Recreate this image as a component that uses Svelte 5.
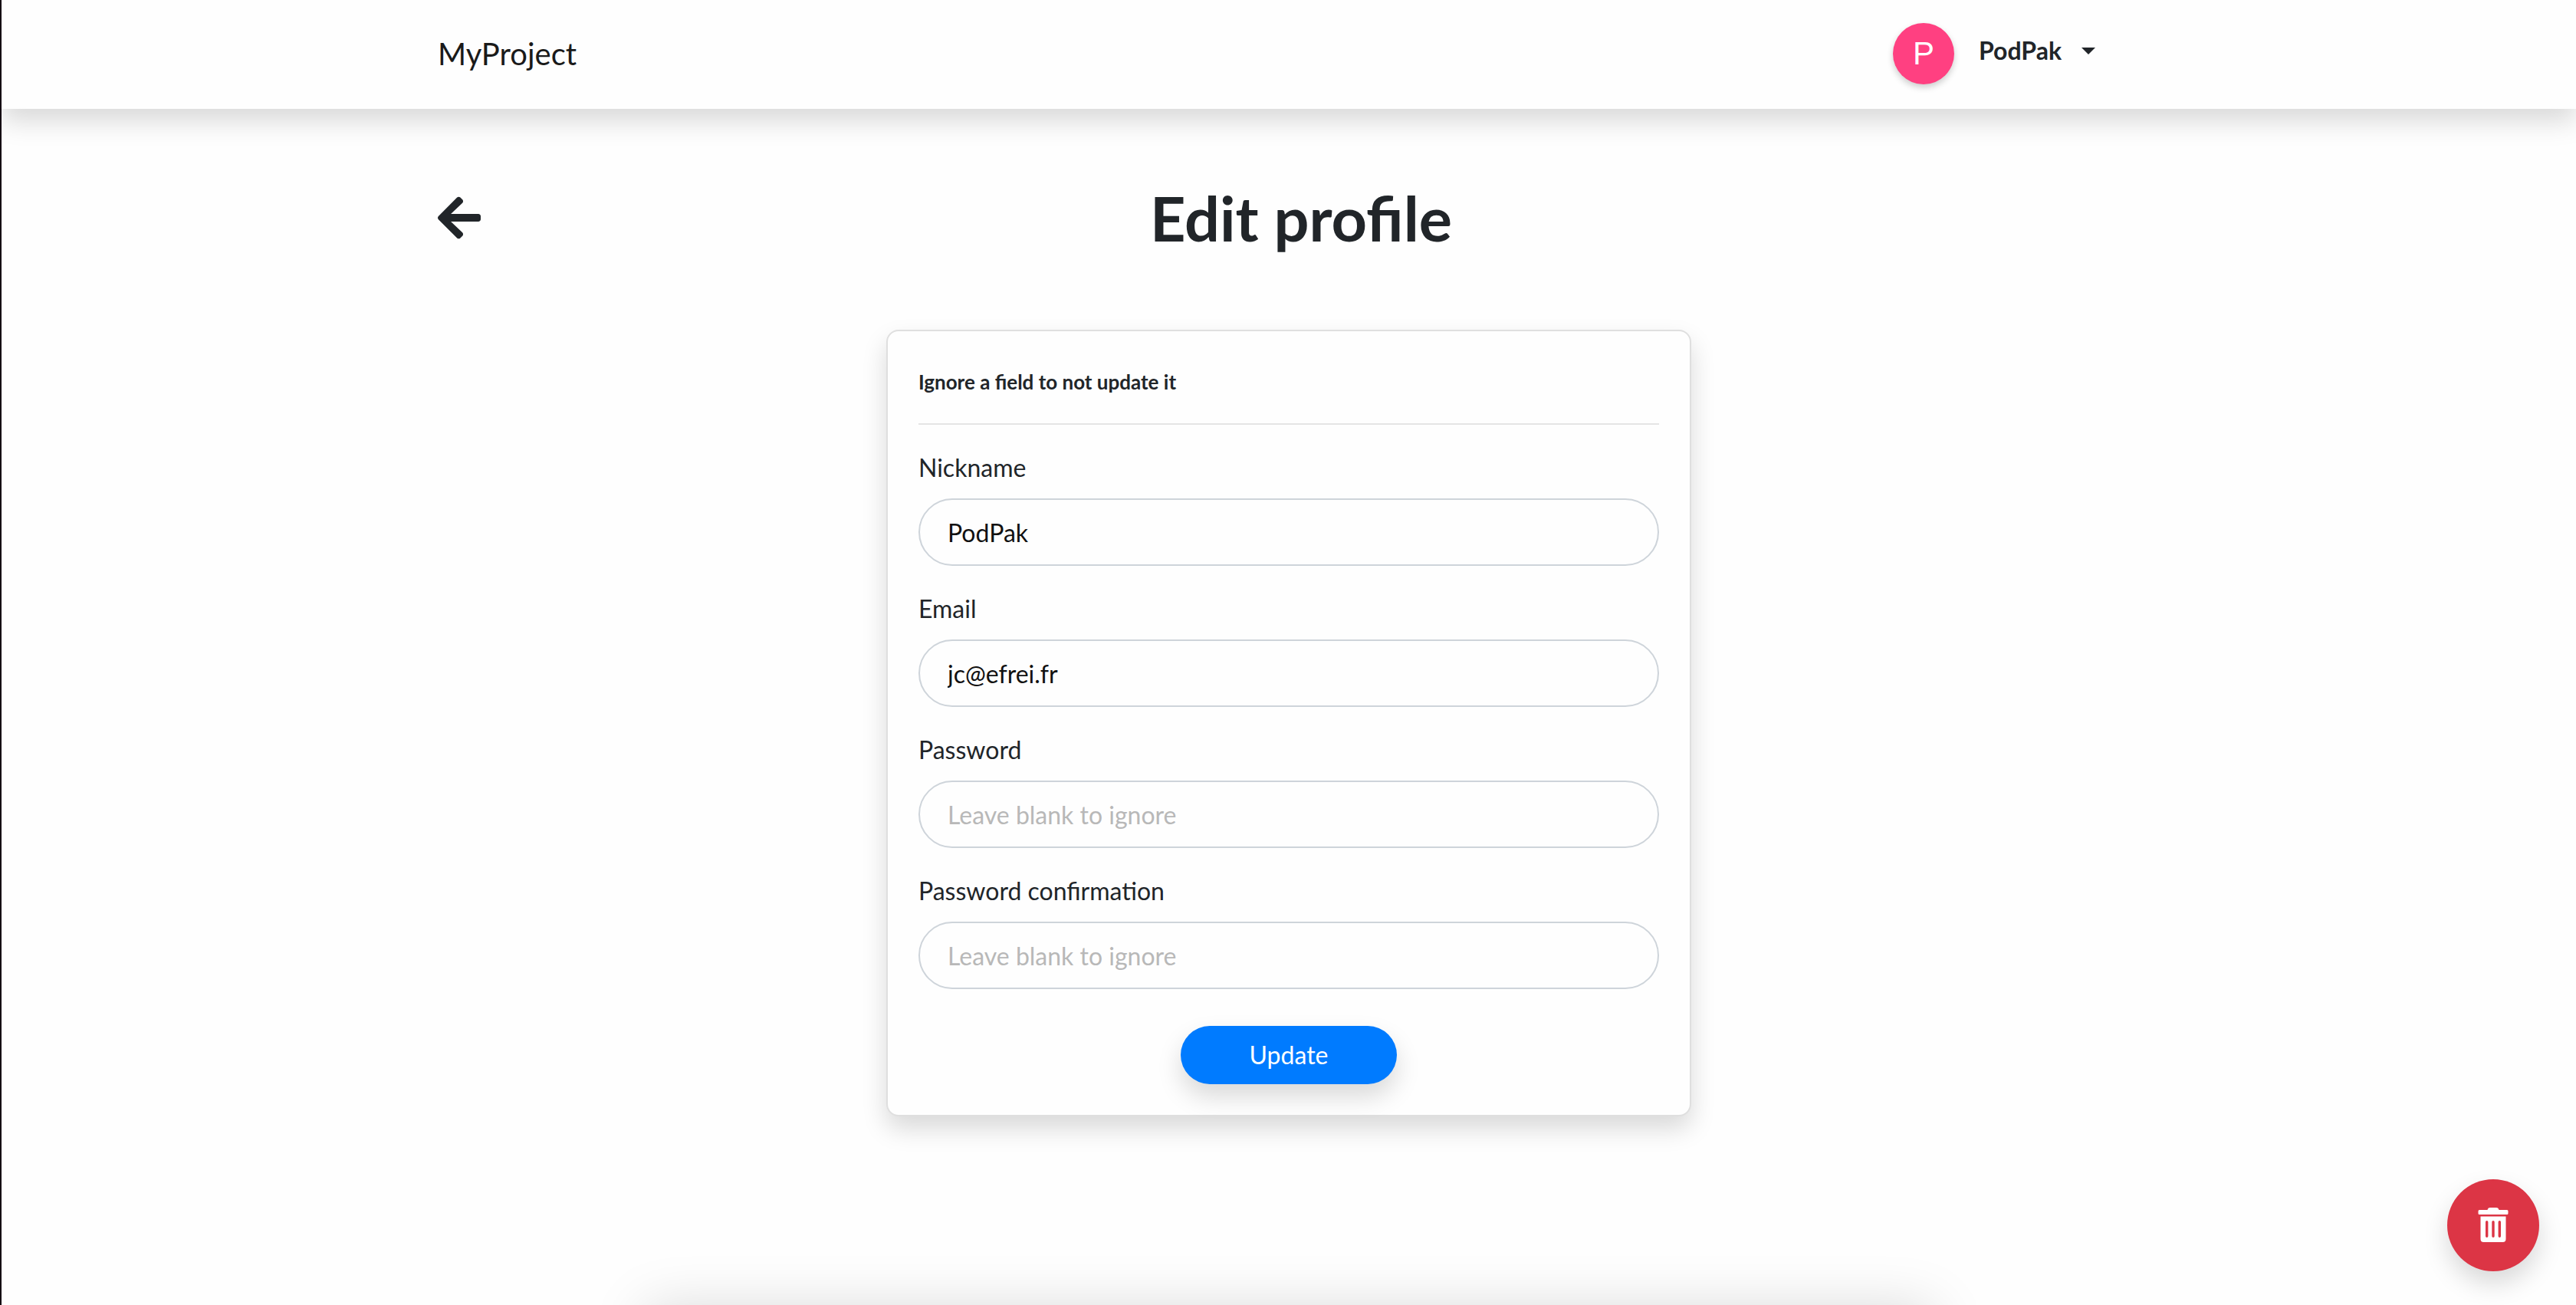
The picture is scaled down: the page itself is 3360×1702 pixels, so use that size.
<script>
  let nickname = $state('PodPak');
  let email = $state('jc@efrei.fr');
  let password = $state('');
  let confirmation = $state('');
</script>

<div class="page">
  <header class="navbar">
    <div class="container bar">
      <a class="brand" href="#home">MyProject</a>
      <div class="account">
        <span class="avatar">P</span>
        <button class="user" type="button" aria-haspopup="menu">
          PodPak
          <span class="caret"></span>
        </button>
      </div>
    </div>
  </header>

  <main class="container">
    <div class="heading">
      <a class="back" href="#back" aria-label="Back">
        <svg viewBox="0 0 448 512" aria-hidden="true">
          <path
            d="M257.500 445.100l-22.200 22.200c-9.400 9.400-24.600 9.400-33.900 0L7 273c-9.400-9.400-9.400-24.600 0-33.900L201.400 44.700c9.400-9.400 24.600-9.400 33.900 0l22.200 22.200c9.500 9.500 9.300 25-.4 34.300L136.600 216H424c13.300 0 24 10.700 24 24v32c0 13.300-10.700 24-24 24H136.600l120.500 114.800c9.800 9.300 10 24.800.4 34.300z"
          />
        </svg>
      </a>
      <h1>Edit profile</h1>
    </div>

    <form class="card" onsubmit={(event) => event.preventDefault()}>
      <p class="hint"><small>Ignore a field to not update it</small></p>
      <hr />
      <div class="field">
        <label for="nickname">Nickname</label>
        <input id="nickname" type="text" bind:value={nickname} />
      </div>
      <div class="field">
        <label for="email">Email</label>
        <input id="email" type="email" bind:value={email} />
      </div>
      <div class="field">
        <label for="password">Password</label>
        <input id="password" type="password" placeholder="Leave blank to ignore" bind:value={password} />
      </div>
      <div class="field">
        <label for="confirmation">Password confirmation</label>
        <input
          id="confirmation"
          type="password"
          placeholder="Leave blank to ignore"
          bind:value={confirmation}
        />
      </div>
      <button class="submit" type="submit">Update</button>
    </form>
  </main>

  <button class="delete" type="button" aria-label="Delete account">
    <svg viewBox="0 0 40 46" aria-hidden="true">
      <path
        d="M2 3H12.500C13 1 14 0 16 0H24C26 0 27 1 27.500 3H38Q39.500 3 39.500 4.500V7.500Q39.500 9 38 9H2Q.5 9 .5 7.500V4.500Q.5 3 2 3Z"
      />
      <path
        fill-rule="evenodd"
        d="M3.500 11.500H36.500V41Q36.500 45 32.500 45H7.500Q3.500 45 3.500 41ZM11.700 17Q10 17 10 18.700V37.300Q10 39 11.700 39T13.400 37.300V18.700Q13.400 17 11.700 17ZM20 17Q18.300 17 18.300 18.700V37.300Q18.300 39 20 39T21.700 37.300V18.700Q21.700 17 20 17ZM28.300 17Q26.600 17 26.600 18.700V37.300Q26.600 39 28.300 39T30 37.300V18.700Q30 17 28.300 17Z"
      />
    </svg>
  </button>

  <div class="drawer" aria-hidden="true"></div>
</div>

<style>
  :global(body) {
    background: #fefefe;
  }

  .page {
    position: relative;
    box-sizing: border-box;
    min-height: 100vh;
    overflow: hidden;
    border-left: 2px solid #140a12;
    color: #212529;
    font-family: Lato, 'Liberation Sans', sans-serif;
    font-size: 32px;
    line-height: 48px;
  }

  button,
  input {
    box-sizing: border-box;
    font: inherit;
  }

  .container {
    box-sizing: border-box;
    width: 100%;
    max-width: 2280px;
    margin: 0 auto;
    padding: 0 30px;
  }

  .navbar {
    padding: 30px 0 32px;
    background: #fefefe;
    box-shadow: 0 16px 32px rgba(0, 0, 0, 0.15);
  }

  .bar {
    display: flex;
    align-items: center;
    justify-content: space-between;
  }

  .brand {
    color: #1a1a1a;
    font-size: 40px;
    text-decoration: none;
  }

  .account {
    display: flex;
    align-items: center;
    gap: 32px;
    margin-right: 34px;
  }

  .avatar {
    display: flex;
    align-items: center;
    justify-content: center;
    width: 80px;
    height: 80px;
    border-radius: 50%;
    background: #ff4081;
    box-shadow: 0 4px 8px rgba(0, 0, 0, 0.2);
    color: #fff;
    font-family: 'Liberation Sans', sans-serif;
    font-size: 42px;
  }

  .user {
    display: flex;
    align-items: center;
    gap: 26px;
    padding: 0 24px 8px 0;
    border: 0;
    background: none;
    color: inherit;
    font-weight: 700;
  }

  .caret {
    border: 9px solid transparent;
    border-top-color: currentColor;
    border-bottom: 0;
  }

  .heading {
    display: flex;
    align-items: center;
    padding: 94px 0 98px;
  }

  .back {
    display: flex;
    color: inherit;
  }

  .back svg {
    width: 56px;
    height: 64px;
    fill: currentColor;
  }

  h1 {
    flex: 1;
    margin: 0 24px 0 0;
    font-size: 81px;
    font-weight: 700;
    line-height: 96px;
    text-align: center;
  }

  .card {
    display: flex;
    flex-direction: column;
    box-sizing: border-box;
    max-width: 1050px;
    margin: 0 auto;
    padding: 40px;
    border: 2px solid #dfdfdf;
    border-radius: 16px;
    background: #fefefe;
    box-shadow: 0 16px 32px rgba(0, 0, 0, 0.15);
  }

  .hint {
    margin: 0;
    font-weight: 700;
  }

  .hint small {
    font-size: 26px;
    line-height: 1;
  }

  hr {
    width: 100%;
    margin: 32px 0;
    border: 0;
    border-top: 2px solid #e5e5e5;
  }

  .field {
    display: flex;
    flex-direction: column;
    gap: 16px;
    margin-bottom: 32px;
  }

  input {
    width: 100%;
    height: 88px;
    padding: 0 36px;
    border: 2px solid #ced4da;
    border-radius: 44px;
    background: #fefefe;
    color: #111;
  }

  input::placeholder {
    color: #b8b8b8;
    opacity: 1;
  }

  .submit {
    align-self: center;
    width: 282px;
    margin-top: 16px;
    padding: 14px 0;
    border: 0;
    border-radius: 38px;
    background: #007bff;
    box-shadow: 0 16px 32px rgba(0, 0, 0, 0.15);
    color: #fff;
  }

  .delete {
    position: absolute;
    right: 48px;
    bottom: 44px;
    display: flex;
    align-items: center;
    justify-content: center;
    width: 120px;
    height: 120px;
    padding: 0;
    border: 0;
    border-radius: 50%;
    background: #dc3545;
    box-shadow: 0 16px 32px rgba(0, 0, 0, 0.15);
  }

  .delete svg {
    width: 40px;
    height: 46px;
    fill: #fff;
  }

  /* Drawer parked below the fold: only its shadow reaches the page. */
  .drawer {
    position: absolute;
    top: 100%;
    right: 25%;
    left: 25%;
    height: 200px;
    box-shadow: 0 4px 72px rgba(0, 0, 0, 0.15);
  }
</style>
